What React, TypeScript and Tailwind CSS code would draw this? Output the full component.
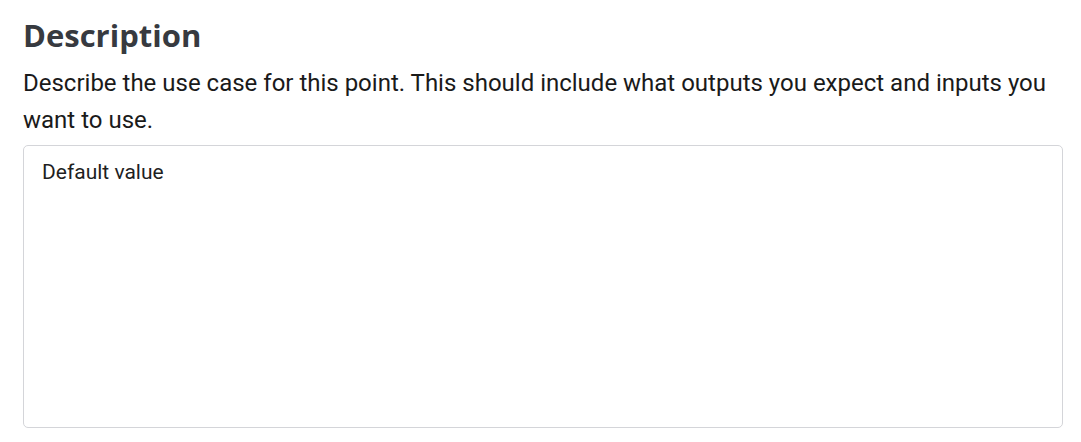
export default function App() {
  return (
    <div className="w-[1081px] h-[442px] bg-white px-[23px] pt-[14px] font-['Roboto',sans-serif]">
      <h2 className="font-['Open_Sans',sans-serif] text-[31px] leading-[42px] font-bold text-[#373a40]">
        Description
      </h2>
      <p className="mt-[9px] text-[24px] leading-[37px] text-[#1a1a1a]">
        Describe the use case for this point. This should include what outputs you expect and inputs you want to use.
      </p>
      <textarea
        className="mt-[6px] block w-[1040px] h-[283px] resize-none rounded-[5px] border border-[#d4d5d9] px-[18px] py-[12px] text-[21px] leading-[28px] text-[#1f1f1f] outline-none"
        defaultValue="Default value"
      />
    </div>
  );
}
